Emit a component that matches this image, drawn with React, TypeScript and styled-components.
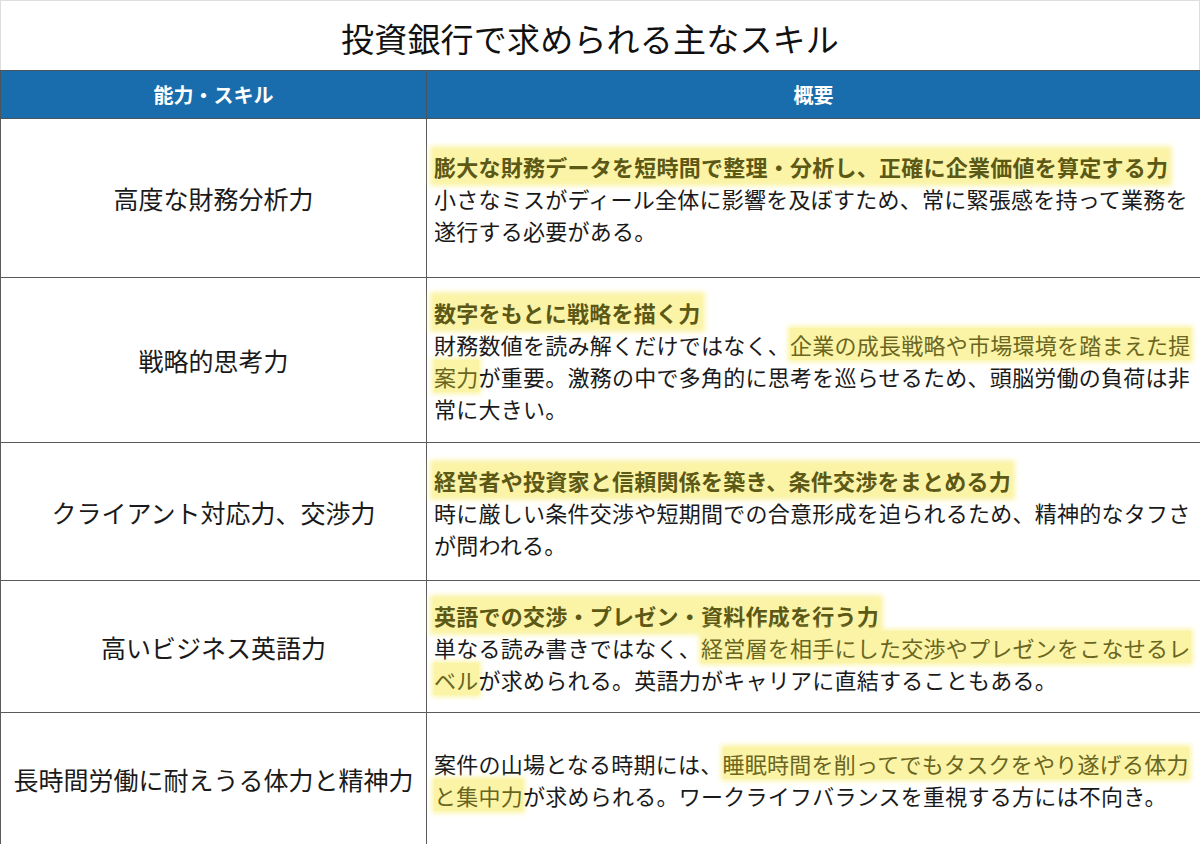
import * as React from 'react';
import styled, { createGlobalStyle } from 'styled-components';

const GlobalStyle = createGlobalStyle`
	html, body {
		margin: 0;
		padding: 0;
		background: #ffffff;
	}
	body {
		font-family: "Noto Sans CJK JP", "Noto Sans", sans-serif;
		color: #1e1e1e;
	}
`;

const Page = styled.div`
	width: 1200px;
	height: 844px;
	overflow: hidden;
	box-sizing: border-box;
`;

const Title = styled.h1`
	margin: 0;
	height: 70px;
	display: flex;
	align-items: center;
	justify-content: center;
	box-sizing: border-box;
	border: 1px solid #dddddd;
	border-bottom: none;
	font-size: 33px;
	font-weight: 400;
	letter-spacing: 0.2px;
	color: #111111;
	padding: 4px 20px 0 0;
`;

const Table = styled.table`
	width: 1200px;
	table-layout: fixed;
	border-collapse: collapse;
`;

const HeadCell = styled.th`
	height: 47px;
	padding: 0;
	background: #1a6dac;
	color: #ffffff;
	font-size: 20px;
	font-weight: 700;
	text-align: center;
	vertical-align: middle;
	border: 1px solid #4a5560;
`;

interface RowProps {
	height: number;
}

const Row = styled.tr<RowProps>`
	height: ${props => props.height}px;
`;

const SkillCell = styled.td`
	padding: 0 8px;
	border: 1px solid #5a5a5a;
	text-align: center;
	vertical-align: middle;
	font-size: 25px;
	line-height: 36px;
	color: #1a1a1a;
`;

const DescCell = styled.td`
	padding: 0 8px 0 7px;
	border: 1px solid #5a5a5a;
	vertical-align: middle;
	font-size: 22px;
	letter-spacing: 0.25px;
	line-height: 32px;
	color: #1a1a1a;
	text-align: left;
`;

const Lead = styled.div`
	font-weight: 700;
`;

const Body = styled.div`
	font-weight: 400;
`;

interface MarkProps {
	strong?: boolean;
}

const Mark = styled.span<MarkProps>`
	background: #fbf4a6;
	color: ${props => (props.strong ? '#5c5816' : '#6a6622')};
	box-shadow: 0 0 5px ${props => (props.strong ? '4px' : '2px')} #fbf4a6;
	-webkit-box-decoration-break: clone;
	box-decoration-break: clone;
`;

interface Skill {
	name: string;
	height: number;
	lead?: string;
	body: React.ReactNode;
}

const skills: Skill[] = [
	{
		name: '高度な財務分析力',
		height: 159,
		lead: '膨大な財務データを短時間で整理・分析し、正確に企業価値を算定する力',
		body: '小さなミスがディール全体に影響を及ぼすため、常に緊張感を持って業務を遂行する必要がある。',
	},
	{
		name: '戦略的思考力',
		height: 165,
		lead: '数字をもとに戦略を描く力',
		body: (
			<>
				財務数値を読み解くだけではなく、<Mark>企業の成長戦略や市場環境を踏まえた提案力</Mark>
				が重要。激務の中で多角的に思考を巡らせるため、頭脳労働の負荷は非常に大きい。
			</>
		),
	},
	{
		name: 'クライアント対応力、交渉力',
		height: 138,
		lead: '経営者や投資家と信頼関係を築き、条件交渉をまとめる力',
		body: '時に厳しい条件交渉や短期間での合意形成を迫られるため、精神的なタフさが問われる。',
	},
	{
		name: '高いビジネス英語力',
		height: 132,
		lead: '英語での交渉・プレゼン・資料作成を行う力',
		body: (
			<>
				単なる読み書きではなく、<Mark>経営層を相手にした交渉やプレゼンをこなせるレベル</Mark>
				が求められる。英語力がキャリアに直結することもある。
			</>
		),
	},
	{
		name: '長時間労働に耐えうる体力と精神力',
		height: 132,
		body: (
			<>
				案件の山場となる時期には、<Mark>睡眠時間を削ってでもタスクをやり遂げる体力と集中力</Mark>
				が求められる。ワークライフバランスを重視する方には不向き。
			</>
		),
	},
];

export default function App() {
	return (
		<Page>
			<GlobalStyle />
			<Title>投資銀行で求められる主なスキル</Title>
			<Table>
				<colgroup>
					<col style={{ width: 426 }} />
					<col style={{ width: 774 }} />
				</colgroup>
				<thead>
					<tr>
						<HeadCell>能力・スキル</HeadCell>
						<HeadCell>概要</HeadCell>
					</tr>
				</thead>
				<tbody>
					{skills.map(skill => (
						<Row key={skill.name} height={skill.height}>
							<SkillCell>{skill.name}</SkillCell>
							<DescCell>
								{skill.lead && (
									<Lead>
										<Mark strong>{skill.lead}</Mark>
									</Lead>
								)}
								<Body>{skill.body}</Body>
							</DescCell>
						</Row>
					))}
				</tbody>
			</Table>
		</Page>
	);
}
